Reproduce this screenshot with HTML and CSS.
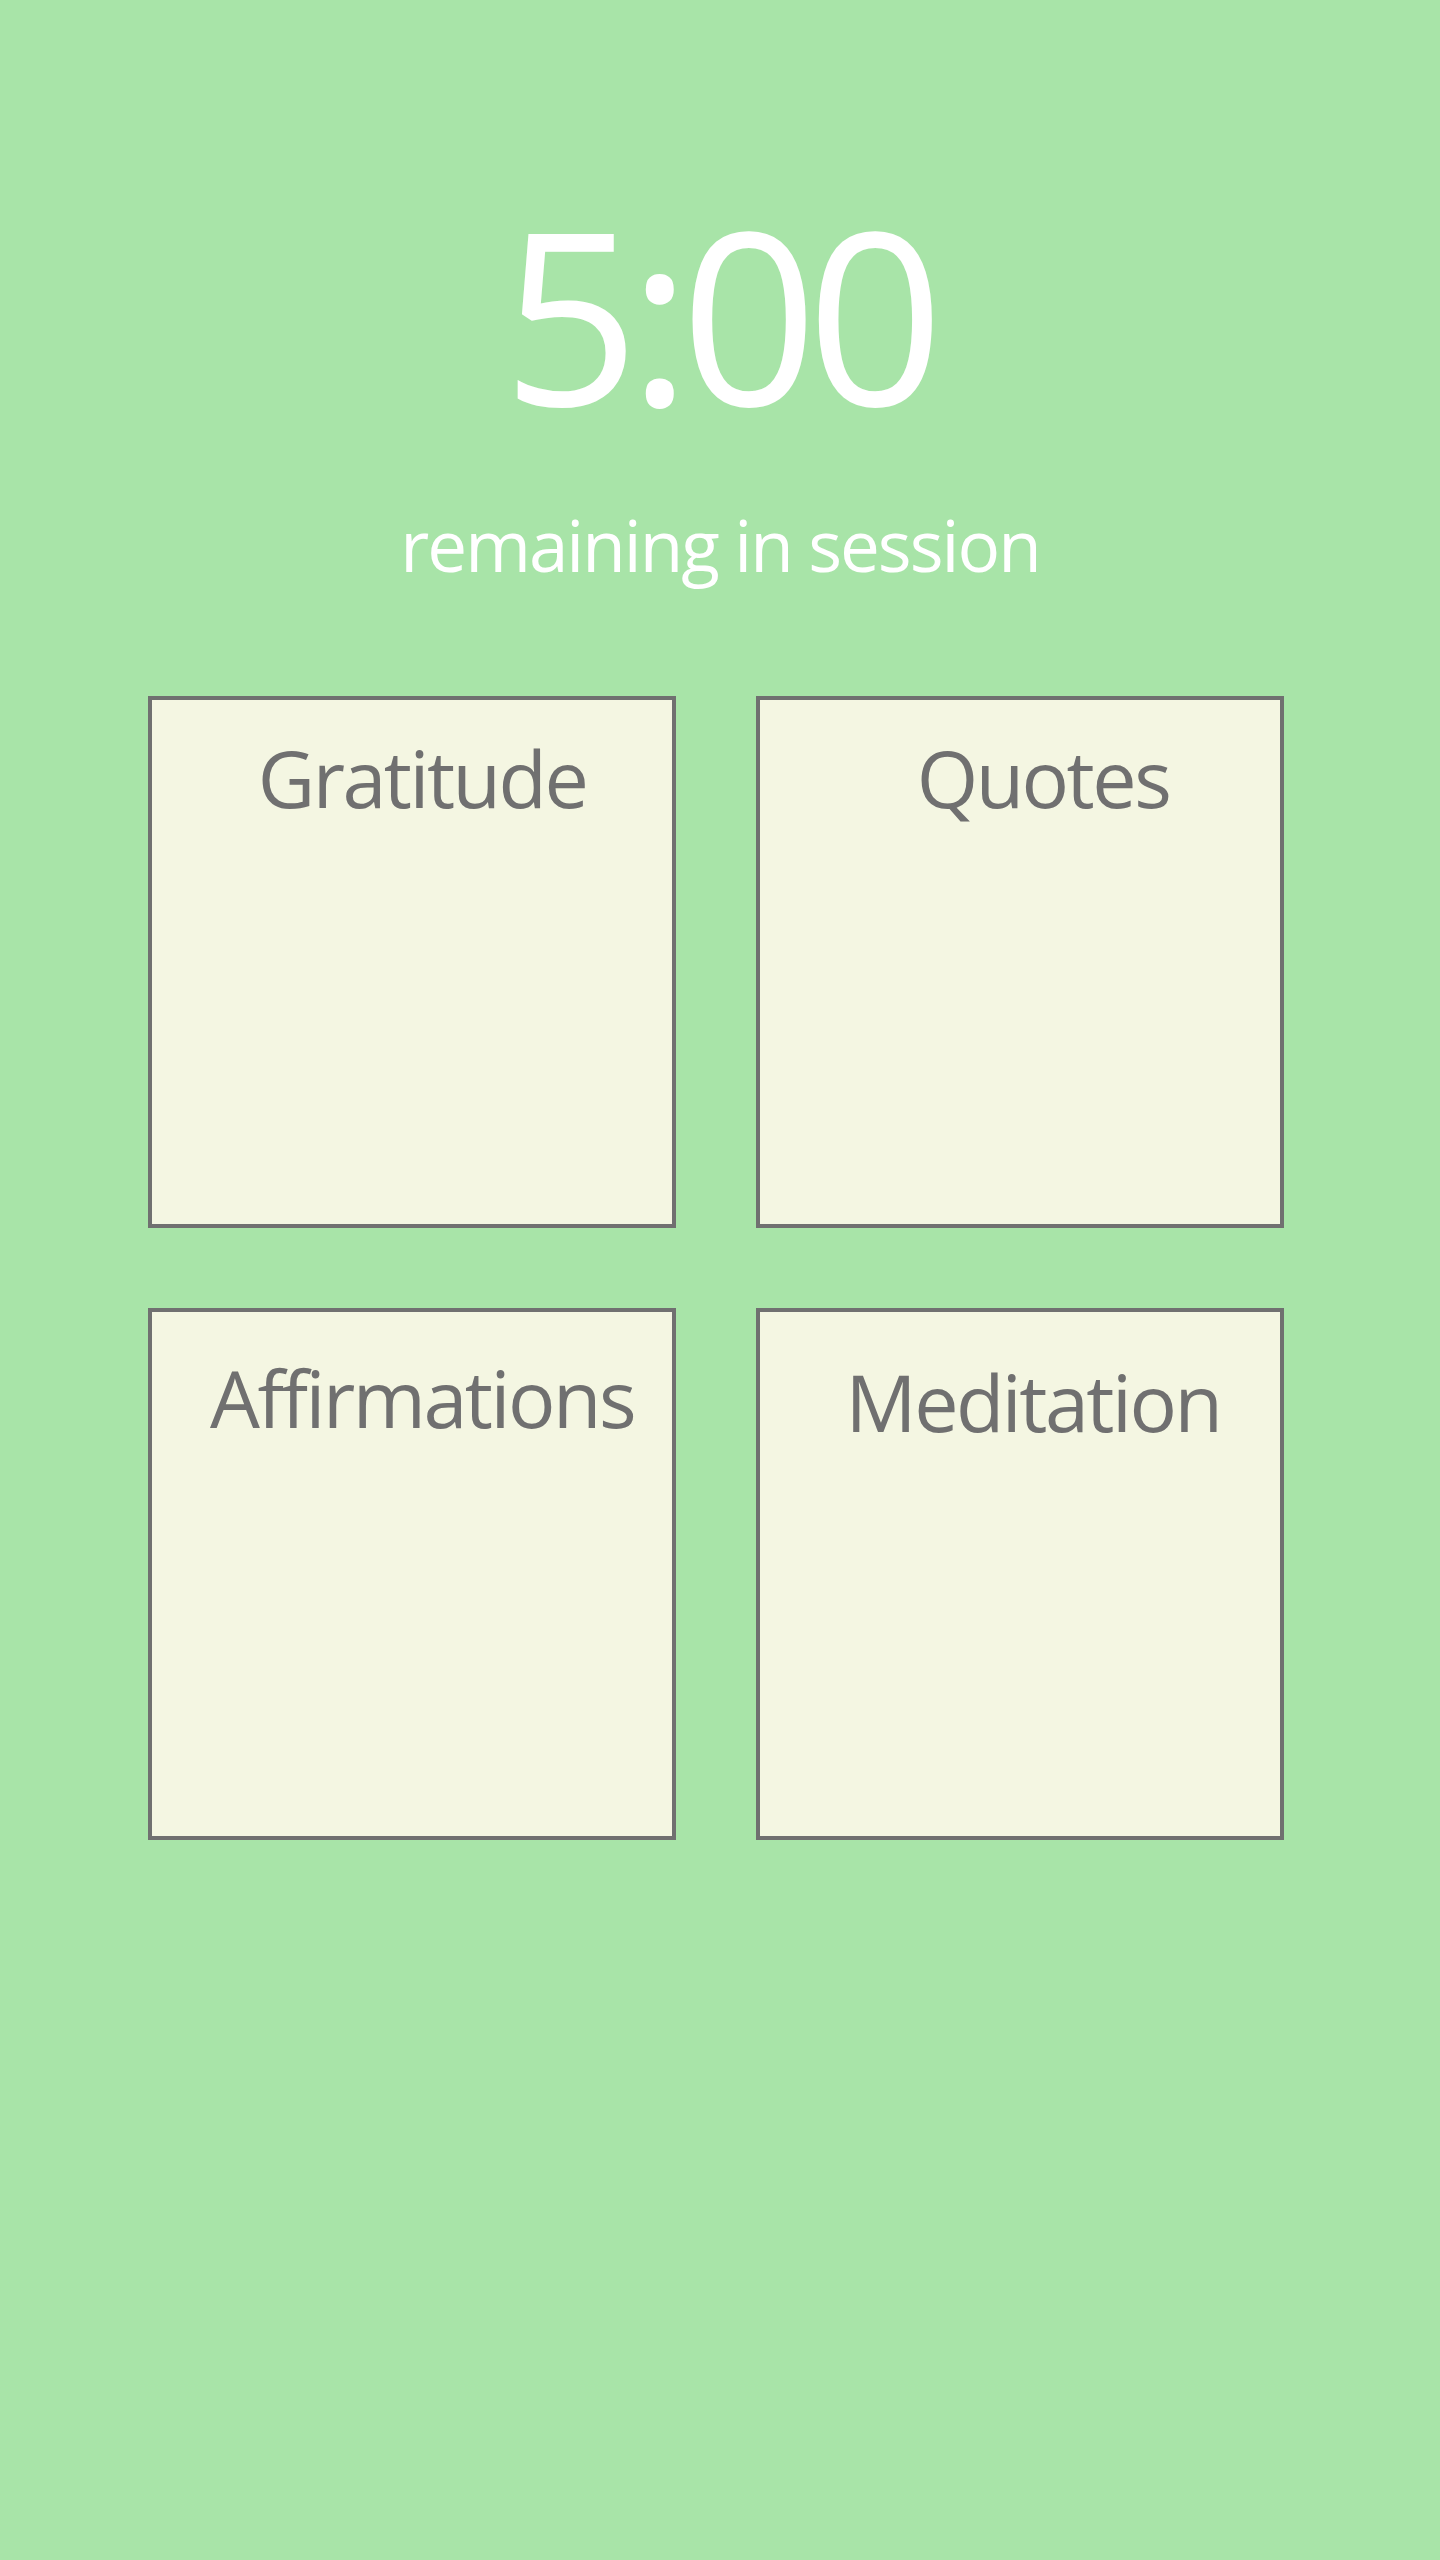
FILE: index.html
```html
<!DOCTYPE html>
<html lang="en">
<head>
<meta charset="utf-8">
<title>Session</title>
<link rel="stylesheet" href="styles.css">
</head>
<body>
<main class="screen">
  <div class="timer">5:00</div>
  <div class="subtitle">remaining in session</div>
  <section class="grid">
    <div class="card card-gratitude"><div class="label">Gratitude</div></div>
    <div class="card card-quotes"><div class="label">Quotes</div></div>
    <div class="card card-affirmations"><div class="label">Affirmations</div></div>
    <div class="card card-meditation"><div class="label">Meditation</div></div>
  </section>
</main>
</body>
</html>
```

FILE: styles.css
```css
html, body {
  margin: 0;
  padding: 0;
}
body {
  background: #a8e4a8;
  font-family: "Open Sans", "Noto Sans", sans-serif;
  min-height: 2560px;
}
.screen {
  padding-top: 193px;
  display: flex;
  flex-direction: column;
}
.timer {
  color: #ffffff;
  font-size: 240px;
  line-height: 1;
  height: 240px;
  text-align: center;
  letter-spacing: -11px;
  padding-right: 5px;
}
.subtitle {
  color: #ffffff;
  font-size: 71px;
  line-height: 1;
  height: 71px;
  margin-top: 76px;
  text-align: center;
  letter-spacing: -2px;
}
.grid {
  margin-top: 116px;
  margin-left: 148px;
  display: grid;
  grid-template-columns: 528px 528px;
  grid-template-rows: 532px 532px;
  column-gap: 80px;
  row-gap: 80px;
}
.card {
  box-sizing: border-box;
  background: #f4f6e2;
  border: 4px solid #707070;
}
.label {
  color: #707070;
  font-size: 79px;
  line-height: 1;
  text-align: center;
  letter-spacing: -2.5px;
}
.card-gratitude .label { padding-top: 38px; padding-left: 20px; }
.card-quotes .label { padding-top: 38px; padding-left: 46px; }
.card-affirmations .label { padding-top: 46px; padding-left: 20px; }
.card-meditation .label { padding-top: 50px; padding-left: 26px; }
```
